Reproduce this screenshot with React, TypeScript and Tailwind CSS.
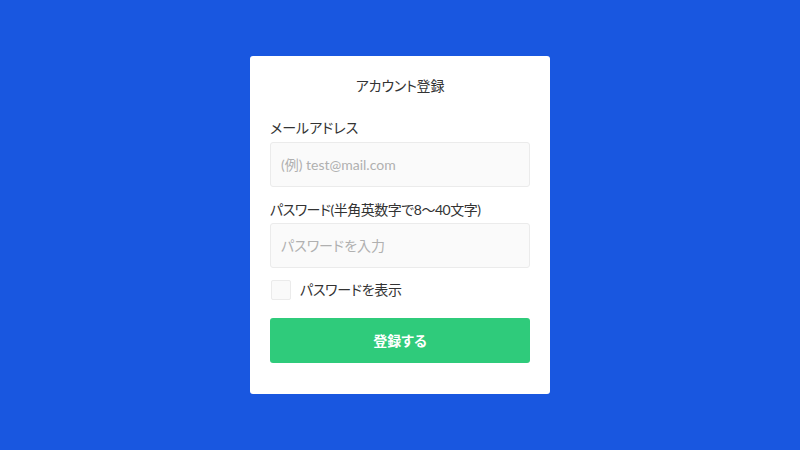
export default function App() {
  return (
    <div
      className="w-[800px] h-[450px] bg-[#1957e0] flex justify-center pt-[56px] [font-feature-settings:'palt']"
      style={{ fontFamily: 'Lato, "Noto Sans CJK JP", sans-serif' }}
    >
      <form className="w-[300px] h-[338px] bg-white rounded-[3px] px-5 pt-5 flex flex-col text-[#333]">
        <h1 className="text-[14px] leading-5 text-center tracking-[-0.2px]">アカウント登録</h1>

        <label className="mt-[22px] text-[14px] leading-5">メールアドレス</label>
        <input
          type="text"
          placeholder="(例) test@mail.com"
          className="mt-1 h-[45px] w-full rounded-[3px] border border-[#ebebeb] bg-[#fafafa] px-[10px] text-[14px] placeholder:text-[#b0b0b0] outline-none"
        />

        <label className="mt-[13px] text-[14px] leading-5 tracking-[-0.5px]">パスワード(半角英数字で8〜40文字)</label>
        <input
          type="password"
          placeholder="パスワードを入力"
          className="mt-[3px] h-[45px] w-full rounded-[3px] border border-[#ebebeb] bg-[#fafafa] px-[10px] text-[14px] placeholder:text-[#b0b0b0] outline-none"
        />

        <label className="mt-3 flex items-center gap-[9px] pl-px text-[14px] leading-5 tracking-[-0.3px]">
          <span className="w-5 h-5 rounded-[2px] border border-[#ebebeb] bg-[#fafafa]" />
          パスワードを表示
        </label>

        <button
          type="button"
          className="mt-[18px] h-[45px] w-full rounded-[3px] bg-[#2fcb7b] text-white text-[14px] font-bold"
        >
          登録する
        </button>
      </form>
    </div>
  )
}
